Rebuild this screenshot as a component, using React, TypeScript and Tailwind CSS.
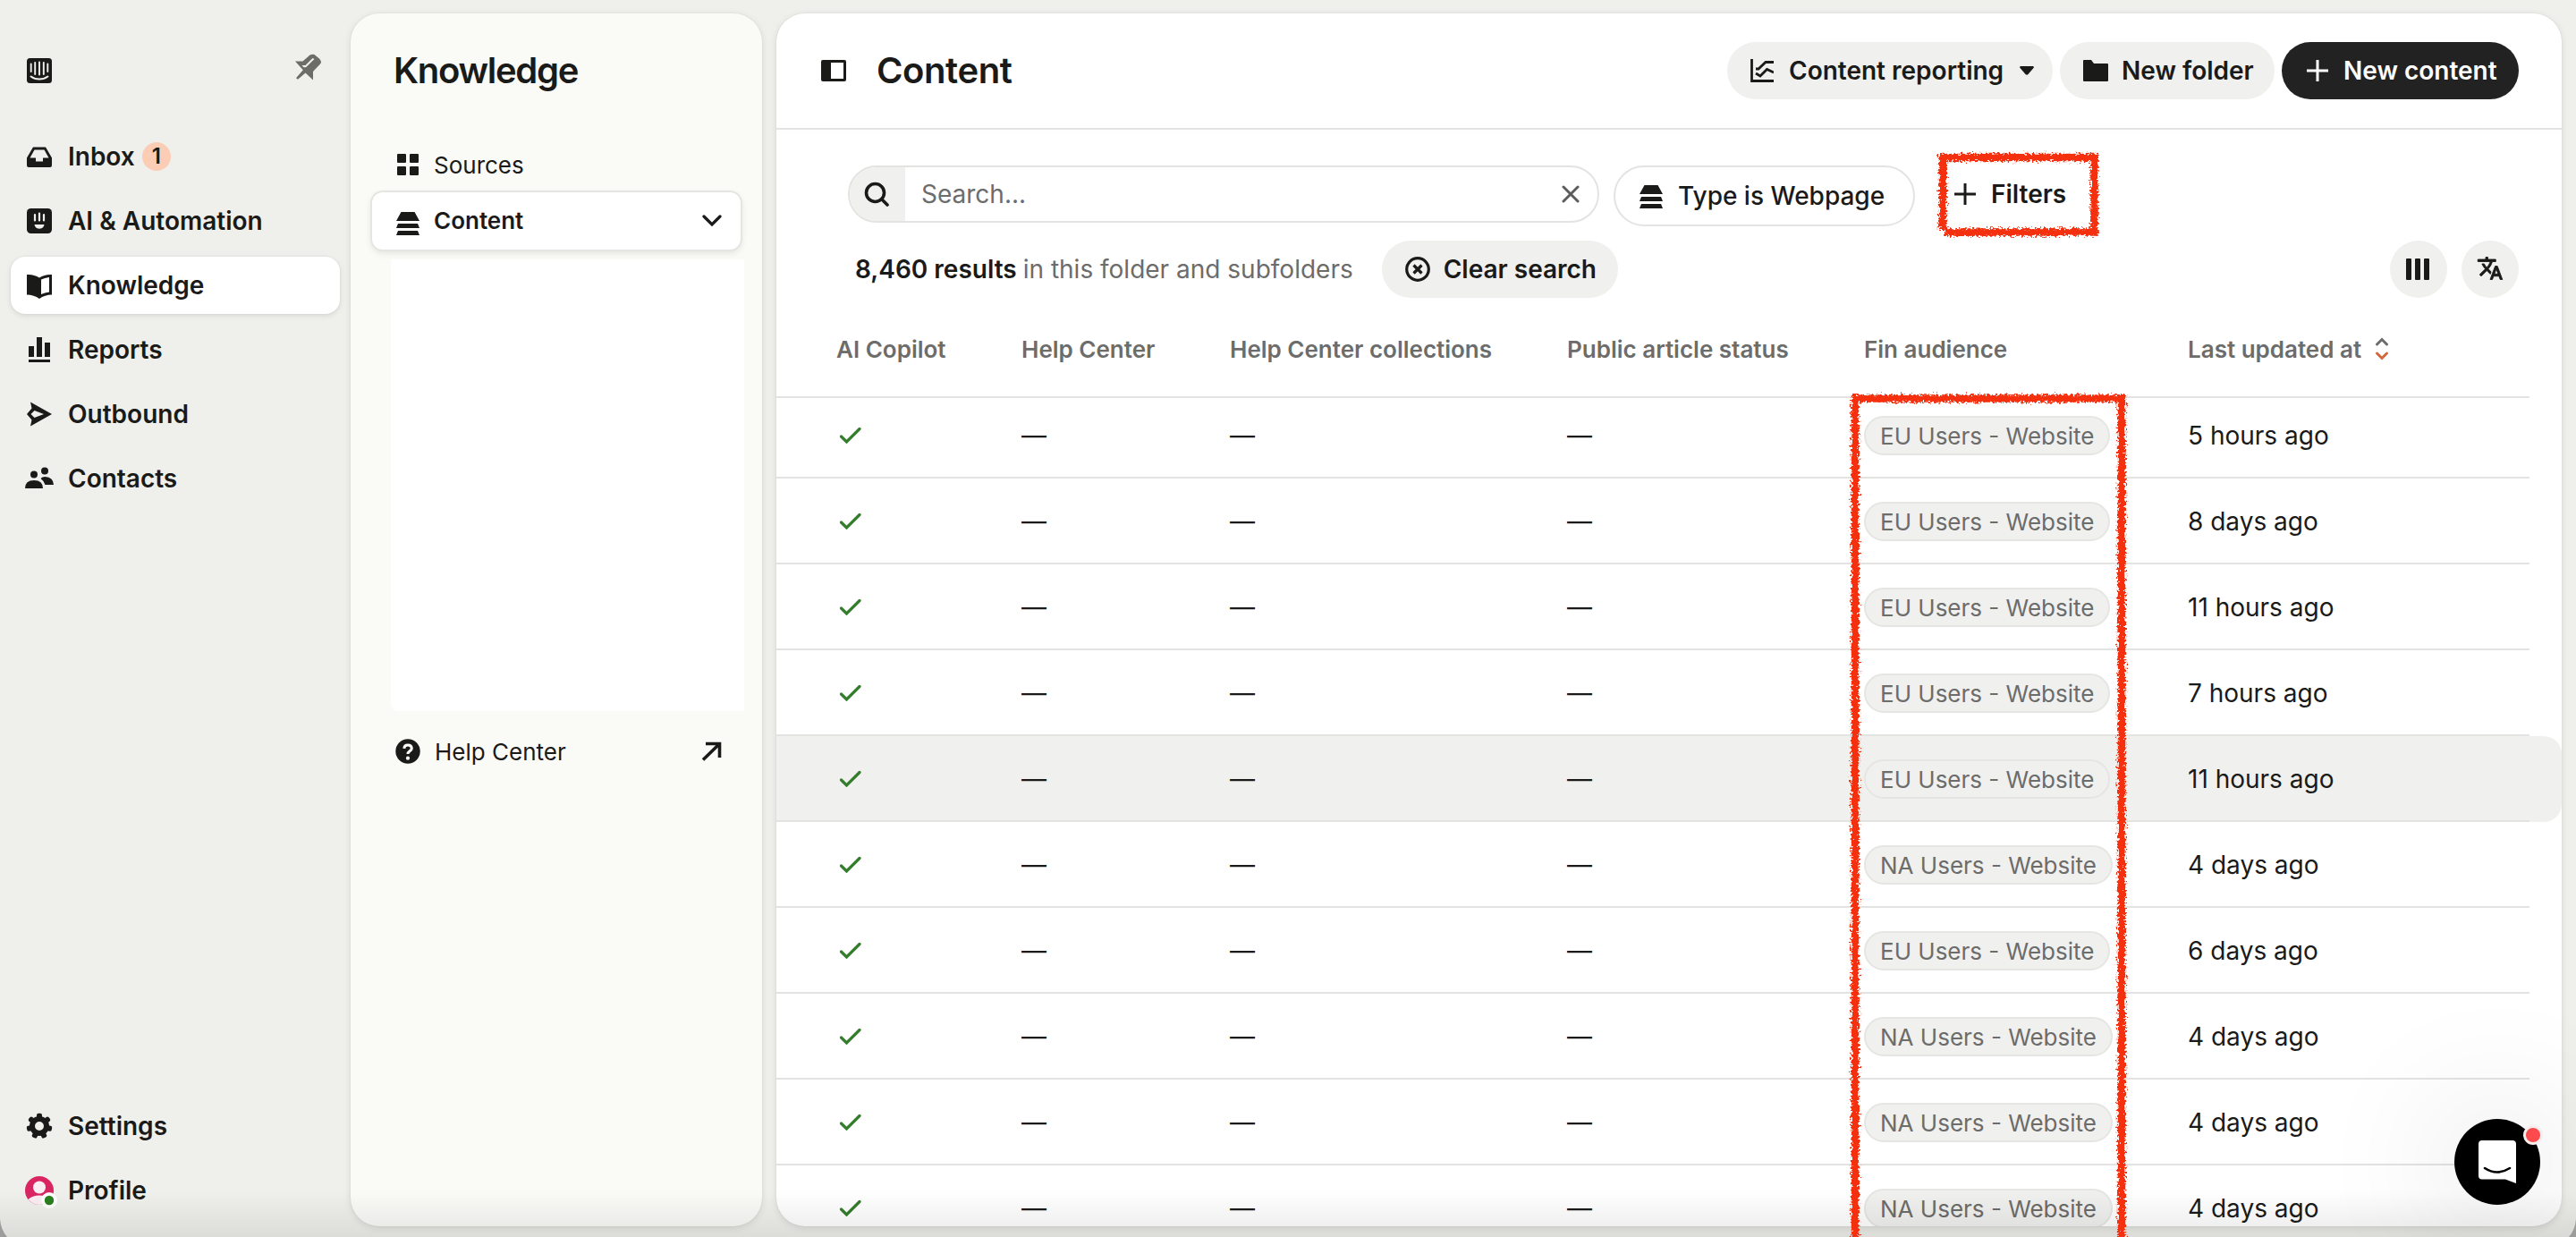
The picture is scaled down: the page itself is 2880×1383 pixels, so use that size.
import React from 'react';
import clsx from 'clsx';

function LogoIcon() {
  return (
    <svg className="w-8 h-8" viewBox="0 0 32 32" fill="none">
      <rect x="2" y="2" width="28" height="28" rx="3.5" fill="#1a1a19" />
      <path d="M6.7 8.5v8.5M11.2 7v13M16 6.5v14M20.8 7v13M25.3 8.5v8.5" stroke="#eff0eb" strokeWidth="1.9" strokeLinecap="round" />
      <path d="M6.5 22.5c5.5 4 13.5 4 19 0" stroke="#eff0eb" strokeWidth="1.9" strokeLinecap="round" />
    </svg>
  );
}

function PinIcon() {
  return (
    <svg className="w-[30px] h-[30px]" viewBox="0 0 30 30">
      <path d="M0 8.5H8.5L16.5 1.5Q19 .2 21.5 1L27.5 6Q29.6 8.5 28.5 11L20 20V29.5L11.5 21.5L3 28.8L1 27.2L8.8 18.3Z" fill="#6c6c69" />
      <path d="M7.5 13H11.5L19.5 5L21.5 6L12 15.2H9.5Z" fill="#eff0eb" />
    </svg>
  );
}

function InboxIcon() {
  return (
    <svg className="w-8 h-8" viewBox="0 0 32 32" fill="#1a1a19">
      <path fillRule="evenodd" d="M9 5.5H23L30 17.5V26Q30 28 28 28H4Q2 28 2 26V17.5ZM10.5 8.5L5.5 17.5H12V21.5H20V17.5H26.5L21.5 8.5Z" />
    </svg>
  );
}

function RobotIcon() {
  return (
    <svg className="w-8 h-8" viewBox="0 0 32 32">
      <rect x="2" y="2" width="28" height="28" rx="4.5" fill="#1a1a19" />
      <path d="M11 9v6.5M16 7.5v8M21 9v6.5" stroke="#eff0eb" strokeWidth="2.2" strokeLinecap="round" />
      <path d="M10.5 20h11c-.5 3-2.5 4.7-5.5 4.7s-5-1.7-5.5-4.7z" fill="#eff0eb" />
    </svg>
  );
}

function BookIcon() {
  return (
    <svg className="w-8 h-8" viewBox="0 0 32 32" fill="#1a1a19">
      <path fillRule="evenodd" d="M2 4Q10 3.5 16 7.5Q22 3.5 30 4V26.5Q22 26.5 16 31Q10 26.5 2 26.5ZM18 9.5V26Q22 24 27 23.5V7Q22 7.5 18 9.5Z" />
    </svg>
  );
}

function ReportsIcon() {
  return (
    <svg className="w-8 h-8" viewBox="0 0 32 32" fill="#1a1a19">
      <path d="M4 12h6v12H4zM13 2h6v22h-6zM22 8h6v16h-6zM4 27h24v3H4z" />
    </svg>
  );
}

function OutboundIcon() {
  return (
    <svg className="w-8 h-8" viewBox="0 0 32 32" fill="#1a1a19">
      <path fillRule="evenodd" d="M6 2.5L30 16L6 29.5L7.5 22.5L2 16L7.5 9.5ZM10.5 12L6.5 16L10.5 20L21 16Z" />
    </svg>
  );
}

function ContactsIcon() {
  return (
    <svg className="w-8 h-8" viewBox="0 0 32 32" fill="#1a1a19">
      <circle cx="10" cy="11.5" r="4" />
      <circle cx="22" cy="7.5" r="4" />
      <path d="M0 27Q0 18 10 18T20 27ZM17.5 16Q19 14 22.5 14Q31.5 14.5 32 23H22.5Q21 18.5 17.5 16Z" />
    </svg>
  );
}

function GearIcon() {
  return (
    <svg className="w-8 h-8" viewBox="0 0 32 32">
      <circle cx="16" cy="16" r="8" fill="none" stroke="#1a1a19" strokeWidth="6" />
      {[0, 1, 2, 3, 4, 5, 6].map((i) => (
        <rect key={i} x="13" y="1.7" width="6" height="7" rx="2" fill="#1a1a19" transform={`rotate(${(i * 360) / 7} 16 16)`} />
      ))}
    </svg>
  );
}

function ProfileIcon() {
  return (
    <svg className="w-9 h-9" viewBox="0 0 36 36">
      <circle cx="16" cy="16" r="16" fill="#d92662" />
      <circle cx="16" cy="12.5" r="7" fill="#fbeef3" />
      <path d="M3.5 26Q8 21.5 16 21.5T28.5 26Q23 32 16 32T3.5 26Z" fill="#fbeef3" />
      <circle cx="27" cy="27" r="9" fill="#fff" />
      <circle cx="27" cy="27" r="5.2" fill="#2a7f1f" />
    </svg>
  );
}

function StackIcon() {
  return (
    <svg className="w-[26px] h-[26px]" viewBox="0 0 26 26" fill="#1a1a19">
      <path d="M5.5 0h15L26 10H0zM2 13h22l2 5H0zM2 21h22l2 5H0z" />
    </svg>
  );
}

function PlusIcon() {
  return (
    <svg className="w-[26px] h-[26px]" viewBox="0 0 26 26" fill="none" stroke="currentColor" strokeWidth="3">
      <path d="M13 1v24M1 13h24" />
    </svg>
  );
}

function TranslateIcon() {
  return (
    <svg className="w-[30px] h-[30px] mb-[2px]" viewBox="0 0 24 24" fill="#1a1a19" stroke="#1a1a19" strokeWidth="0.7" strokeLinejoin="round">
      <path d="M12.87 15.07l-2.54-2.51.03-.03A17.52 17.52 0 0 0 14.07 6H17V4h-7V2H8v2H1v1.99h11.17C11.5 7.92 10.44 9.75 9 11.35 8.07 10.32 7.3 9.19 6.69 8h-2c.73 1.63 1.73 3.17 2.98 4.56l-5.09 5.02L4 19l5-5 3.11 3.11.76-2.04zM18.5 10h-2L12 22h2l1.12-3h4.75L21 22h2l-4.5-12zm-2.62 7l1.62-4.33L19.12 17h-3.24z" />
    </svg>
  );
}

const mainNav = [
  { label: 'Inbox', icon: <InboxIcon />, badge: 1 },
  { label: 'AI & Automation', icon: <RobotIcon /> },
  { label: 'Knowledge', icon: <BookIcon />, active: true },
  { label: 'Reports', icon: <ReportsIcon /> },
  { label: 'Outbound', icon: <OutboundIcon /> },
  { label: 'Contacts', icon: <ContactsIcon /> },
];

const rows = [
  { audience: 'EU Users - Website', updated: '5 hours ago' },
  { audience: 'EU Users - Website', updated: '8 days ago' },
  { audience: 'EU Users - Website', updated: '11 hours ago' },
  { audience: 'EU Users - Website', updated: '7 hours ago' },
  { audience: 'EU Users - Website', updated: '11 hours ago', hovered: true },
  { audience: 'NA Users - Website', updated: '4 days ago' },
  { audience: 'EU Users - Website', updated: '6 days ago' },
  { audience: 'NA Users - Website', updated: '4 days ago' },
  { audience: 'NA Users - Website', updated: '4 days ago' },
  { audience: 'NA Users - Website', updated: '4 days ago' },
];

const columns = 'grid grid-cols-[206px_233px_377px_332px_362px_1fr] pl-[68px] items-center';

function NavItem({ label, icon, badge, active }: { label: string; icon: React.ReactNode; badge?: number; active?: boolean }) {
  return (
    <div
      className={clsx(
        'flex items-center h-16 px-4 gap-4 rounded-2xl text-[28px] font-semibold',
        active && 'bg-white shadow-[0_2px_6px_rgba(0,0,0,0.10),0_0_2px_rgba(0,0,0,0.08)]'
      )}
    >
      <span className="w-8 h-8 shrink-0">{icon}</span>
      <span>{label}</span>
      {badge && (
        <span className="-ml-2 w-8 h-8 rounded-full bg-[#fccdb5] text-[24px] flex items-center justify-center">{badge}</span>
      )}
    </div>
  );
}

function Sidebar() {
  return (
    <nav className="w-[392px] shrink-0 flex flex-col pl-3 pr-3 pb-5">
      <div className="flex items-center justify-between h-[143px] pl-4 pr-5 pb-[1px]">
        <span className="mt-4"><LogoIcon /></span>
        <span className="mt-2"><PinIcon /></span>
      </div>
      <div className="flex flex-col gap-2">
        {mainNav.map((item) => (
          <NavItem key={item.label} {...item} />
        ))}
      </div>
      <div className="flex flex-col gap-2 mt-auto">
        <NavItem label="Settings" icon={<GearIcon />} />
        <NavItem label="Profile" icon={<ProfileIcon />} />
      </div>
    </nav>
  );
}

function KnowledgePanel() {
  return (
    <aside className="w-[460px] shrink-0 rounded-[32px] bg-[#fafaf7] pt-[39px] shadow-[0_2px_8px_rgba(0,0,0,0.10),0_0_2px_rgba(0,0,0,0.08)]">
      <h1 className="pl-12 h-[50px] leading-[50px] text-[40px] font-semibold tracking-[-0.032em]">Knowledge</h1>
      <div className="mt-[51px] h-[58px] pl-[52px] flex items-center gap-[17px] text-[26px] leading-none">
        <svg className="w-6 h-6" viewBox="0 0 24 24" fill="#1a1a19">
          <rect width="10" height="10" rx="1" />
          <rect x="14" width="10" height="10" rx="1" />
          <rect y="14" width="10" height="10" rx="1" />
          <rect x="14" y="14" width="10" height="10" rx="1" />
        </svg>
        <span className="pt-[2px]">Sources</span>
      </div>
      <div className="ml-6 mt-[2px] w-[412px] h-16 pl-[27px] pr-[21px] flex items-center rounded-xl bg-white text-[26px] font-semibold shadow-[0_0_0_2px_#e5e5e2,0_3px_8px_rgba(0,0,0,0.12)]">
        <span className="mt-[6px]"><StackIcon /></span>
        <span className="ml-4 pb-[1px]">Content</span>
        <svg className="w-[22px] h-[14px] ml-auto" viewBox="0 0 22 14" fill="none" stroke="#1a1a19" strokeWidth="3.2" strokeLinecap="round">
          <path d="M2 2l9 9 9-9" />
        </svg>
      </div>
      <div className="ml-[45px] mt-[11px] w-[395px] h-[505px] bg-white rounded-bl-lg" />
      <div className="mt-[15px] h-[60px] pl-[50px] pr-[45px] flex items-center text-[26px]">
        <svg className="w-7 h-7" viewBox="0 0 28 28" fill="none">
          <circle cx="14" cy="14" r="13.7" fill="#1a1a19" />
          <path d="M9.8 10.8Q10 7 14 7T18.3 10.7C18.3 13.5 14 13.5 14 17" stroke="#fff" strokeWidth="3" />
          <circle cx="14" cy="21.7" r="2.1" fill="#fff" />
        </svg>
        <span className="ml-4">Help Center</span>
        <svg className="w-[23px] h-[22px] ml-auto" viewBox="0 0 23 22" fill="none" stroke="#1a1a19" strokeWidth="3.6">
          <path d="M5 2.5h15.5V18M20 3L2 20.5" />
        </svg>
      </div>
    </aside>
  );
}

function Header() {
  return (
    <header className="h-[130px] shrink-0 border-b-2 border-[#e3e3e1] flex items-center pl-[50px] pr-12 text-[28px] font-semibold">
      <svg className="w-7 h-6" viewBox="0 0 28 24">
        <path fillRule="evenodd" fill="#1a1a19" d="M2 0H26Q28 0 28 2V22Q28 24 26 24H2Q0 24 0 22V2Q0 0 2 0ZM11 3V21H25V3Z" />
      </svg>
      <h2 className="ml-[34px] text-[40px] leading-[50px] tracking-[-0.01em]">Content</h2>
      <div className="ml-auto flex gap-2">
        <button className="h-16 w-[364px] pl-[26px] rounded-full bg-[#f0f0ee] flex items-center">
          <svg className="w-[26px] h-[26px]" viewBox="0 0 26 26" fill="none" stroke="#1a1a19" strokeWidth="2.8">
            <path d="M1.5 0V24.5H26M6 11H9L17 3.5H26M6 16L11 19L18.5 11.5L26 15" />
          </svg>
          <span className="ml-[17px]">Content reporting</span>
          <svg className="ml-[18px] w-4 h-[10px]" viewBox="0 0 16 10" fill="#1a1a19">
            <path d="M1 0H15Q16.5 .5 15.5 2L9.5 9Q8 10.5 6.5 9L.5 2Q-.5 .5 1 0Z" />
          </svg>
        </button>
        <button className="h-16 w-[240px] pl-[26px] rounded-full bg-[#f0f0ee] flex items-center">
          <svg className="w-7 h-6" viewBox="0 0 28 24" fill="#1a1a19">
            <path d="M1 0H9L12 4H27Q28 4 28 5V23Q28 24 27 24H1Q0 24 0 23V1Q0 0 1 0Z" />
          </svg>
          <span className="ml-[15px]">New folder</span>
        </button>
        <button className="h-16 w-[265px] pl-[27px] rounded-full bg-[#222] text-white flex items-center">
          <PlusIcon />
          <span className="ml-4">New content</span>
        </button>
      </div>
    </header>
  );
}

function Toolbar() {
  return (
    <div className="pt-10 text-[28px]">
      <div className="flex items-start pl-20">
        <div className="w-[840px] h-16 rounded-full border-2 border-[#e3e3e1] flex items-center overflow-hidden">
          <div className="w-[62px] h-full pr-[2px] bg-[#f0f0ee] flex items-center justify-center">
            <svg className="w-7 h-7" viewBox="0 0 28 28" fill="none" stroke="#1a1a19" strokeWidth="3.6" strokeLinecap="round">
              <circle cx="12.5" cy="12.5" r="10" />
              <path d="M20 20l6 6" />
            </svg>
          </div>
          <span className="ml-[18px] text-[#6c6c6b]">Search...</span>
          <svg className="w-5 h-5 ml-auto mr-5" viewBox="0 0 20 20" fill="none" stroke="#5c5c5b" strokeWidth="3" strokeLinecap="round">
            <path d="M2 2l16 16M18 2L2 18" />
          </svg>
        </div>
        <div className="ml-4 w-[337px] h-[68px] pl-[27px] rounded-full border-2 border-[#e3e3e1] flex items-center font-medium">
          <span className="mt-[2px]"><StackIcon /></span>
          <span className="ml-[17px]">Type is Webpage</span>
        </div>
        <div className="ml-[43px] h-16 flex items-center gap-4 font-semibold">
          <PlusIcon />
          <span>Filters</span>
        </div>
      </div>
      <div className="mt-4 h-16 flex items-center pl-[88px] pr-12">
        <span className="font-semibold">8,460 results</span>
        <span className="ml-[7px] text-[#6c6c6b]">in this folder and subfolders</span>
        <button className="ml-8 h-16 w-[264px] pl-[26px] rounded-full bg-[#f0f0ee] flex items-center font-semibold">
          <svg className="w-7 h-7" viewBox="0 0 28 28" fill="none" stroke="#1a1a19" strokeWidth="3.2">
            <circle cx="14" cy="14" r="12.3" />
            <path d="M9.5 9.5l9 9M18.5 9.5l-9 9" />
          </svg>
          <span className="ml-[15px]">Clear search</span>
        </button>
        <button className="ml-auto w-16 h-16 rounded-full bg-[#f0f0ee] flex items-center justify-center">
          <svg className="w-[26px] h-6 mr-[2px]" viewBox="0 0 26 24" fill="#1a1a19">
            <rect width="6" height="24" rx="1" />
            <rect x="10" width="6" height="24" rx="1" />
            <rect x="20" width="6" height="24" rx="1" />
          </svg>
        </button>
        <button className="ml-4 w-16 h-16 rounded-full bg-[#f0f0ee] flex items-center justify-center">
          <TranslateIcon />
        </button>
      </div>
    </div>
  );
}

function ContentTable() {
  return (
    <>
      <div className={clsx(columns, 'w-[1960px] h-28 shrink-0 pt-1 border-b-2 border-[#e3e3e1] text-[26px] font-semibold text-[#6c6c6b]')}>
        <span className="-ml-[1px]">AI Copilot</span>
        <span>Help Center</span>
        <span>Help Center collections</span>
        <span>Public article status</span>
        <span>Fin audience</span>
        <span className="flex items-center">
          Last updated at
          <svg className="ml-[15px] w-4 h-7" viewBox="0 0 16 28" fill="none" strokeWidth="3" strokeLinecap="round">
            <path d="M2.5 9l5.5-5.5L13.5 9" stroke="#6c6c6b" />
            <path d="M2.5 19l5.5 5.5 5.5-5.5" stroke="#d5673c" />
          </svg>
        </span>
      </div>
      <div className="flex-1 min-h-0 overflow-hidden text-[28px]">
        {/* list is scrolled by a few pixels under the header */}
        <div className="-mt-[6px]">
          {rows.map((row, i) => (
            <div key={i} className={clsx('h-24', row.hovered && 'bg-[#f0f0ee] rounded-r-[20px]')}>
              <div className={clsx(columns, 'w-[1960px] h-full pt-[2px] border-b-2 border-[#e3e3e1]')}>
                <svg className="w-7 h-7" viewBox="0 0 28 28" fill="none" stroke="#347d2c" strokeWidth="3.3" strokeLinecap="round">
                  <path d="M4.5 15l6 6L25 6.5" />
                </svg>
                <span>—</span>
                <span>—</span>
                <span>—</span>
                <span className="justify-self-start h-11 px-4 flex items-center rounded-full border-2 border-[#e5e5e3] bg-[#f0f0ee] text-[26px] text-[#6c6c6b]">
                  {row.audience}
                </span>
                <span>{row.updated}</span>
              </div>
            </div>
          ))}
        </div>
      </div>
    </>
  );
}

function Messenger() {
  return (
    <div className="absolute left-[2744px] top-[1251px] w-24 h-24 rounded-full bg-black shadow-[0_2px_150px_20px_rgba(0,0,0,0.10)] flex items-center justify-center">
      <svg className="w-[42px] h-12" viewBox="0 0 42 48">
        <path d="M4 0H38Q42 0 42 4V48L30 43.5H4Q0 43.5 0 39.5V4Q0 0 4 0Z" fill="#fff" />
        <path d="M7 31Q20.5 40 35 31" fill="none" stroke="#000" strokeWidth="2.6" strokeLinecap="round" />
      </svg>
      <span className="absolute left-[77px] top-[7px] w-[22px] h-[22px] rounded-full border-[3px] border-[#f6eeee] bg-[#fd4b4d]" />
    </div>
  );
}

// hand drawn marker boxes around the filter button and the audience column
function Annotations() {
  return (
    <svg className="absolute inset-0 w-[2880px] h-[1383px] pointer-events-none" viewBox="0 0 2880 1383" fill="none">
      <filter id="crayon" filterUnits="userSpaceOnUse" x="2050" y="150" width="350" height="1233" colorInterpolationFilters="sRGB">
        <feTurbulence type="fractalNoise" baseFrequency="0.4" numOctaves="3" seed="4" />
        <feDisplacementMap in="SourceGraphic" scale="9" xChannelSelector="R" yChannelSelector="G" />
      </filter>
      <g filter="url(#crayon)" stroke="#f5300f" strokeWidth="8.5">
        <path d="M2168 176H2345M2172 172V258M2341.5 172V263M2174 259.5H2345" />
        <path d="M2070 445.5H2376M2074 441V1400M2372 441V1400" />
      </g>
    </svg>
  );
}

export default function App() {
  return (
    <div className="relative w-[2880px] h-[1383px] overflow-hidden bg-[#eff0eb] text-[#1a1a19] font-['Inter',sans-serif] flex">
      <Sidebar />
      <div className="flex gap-4 pt-[15px] pb-3">
        <KnowledgePanel />
        <main className="w-[1996px] rounded-[32px] bg-white overflow-hidden flex flex-col shadow-[0_2px_8px_rgba(0,0,0,0.10),0_0_2px_rgba(0,0,0,0.08)]">
          <Header />
          <Toolbar />
          <ContentTable />
        </main>
      </div>
      <div className="absolute inset-x-0 bottom-0 h-[52px] bg-linear-to-t from-black/8 to-transparent pointer-events-none" />
      <Messenger />
      <Annotations />
      <svg className="absolute left-0 bottom-0 w-2 h-5" viewBox="0 0 8 20">
        <path d="M0 0Q1 12 8 20H0Z" fill="#9c9c9a" />
      </svg>
      <svg className="absolute right-0 bottom-0 w-2 h-5" viewBox="0 0 8 20">
        <path d="M8 0Q7 12 0 20H8Z" fill="#9c9c9a" />
      </svg>
    </div>
  );
}
